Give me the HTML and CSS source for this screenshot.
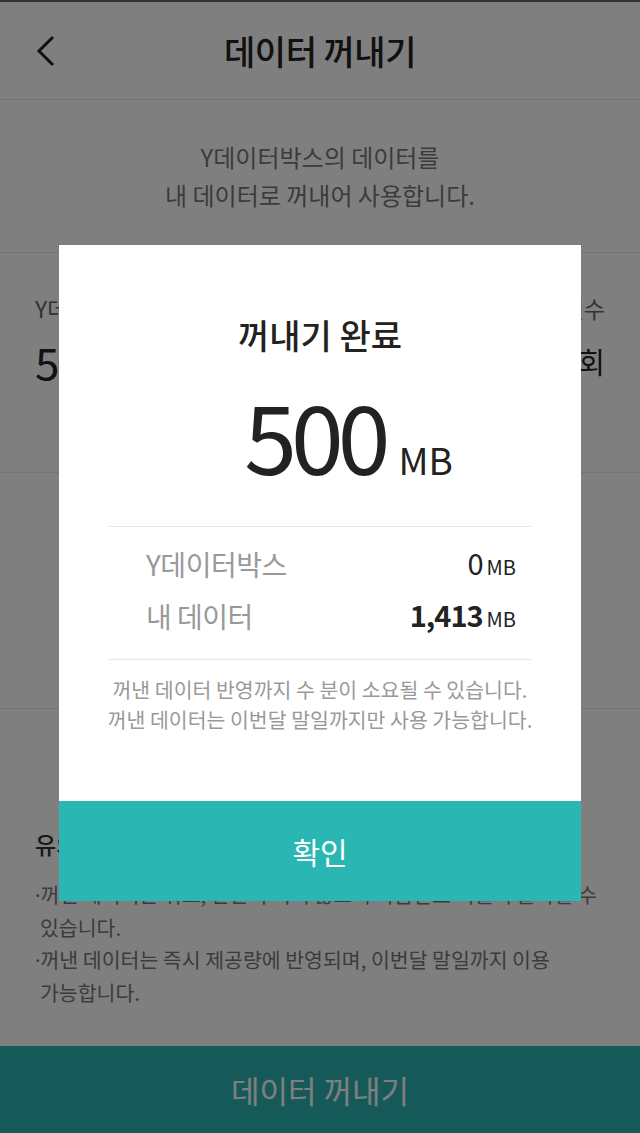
FILE: index.html
```html
<!DOCTYPE html>
<html>
<head>
    <title>데이터 꺼내기</title>
    <link rel="stylesheet" href="styles.css">
</head>
<body>
    <div class="page">
        <!-- 상단 헤더 -->
        <div class="header">
            <a class="back" href="#">
                <svg width="22" height="34" viewBox="0 0 22 34">
                    <polyline points="18,3 4,17 18,31" fill="none" stroke="#222" stroke-width="3"/>
                </svg>
            </a>
            <h1>데이터 꺼내기</h1>
        </div>

        <div class="intro">
            <p>Y데이터박스의 데이터를<br>내 데이터로 꺼내어 사용합니다.</p>
        </div>

        <!-- 잔여량 / 횟수 -->
        <div class="summary">
            <div class="col">
                <div class="label">Y데이터박스 잔여량</div>
                <div class="value">500<span class="unit">MB</span></div>
            </div>
            <div class="col right">
                <div class="label">이번달 꺼내기 가능 횟수</div>
                <div class="value small">2회</div>
            </div>
        </div>

        <!-- 꺼낼 용량 선택 영역 (팝업에 가려짐) -->
        <div class="picker"></div>

        <div class="notice">
            <h2>유의사항</h2>
            <ul>
                <li><span class="dot">·</span>꺼낸 데이터는 취소, 반환이 되지 않으며 다음달로 이월이 불가할 수 있습니다.</li>
                <li><span class="dot">·</span>꺼낸 데이터는 즉시 제공량에 반영되며, 이번달 말일까지 이용 가능합니다.</li>
            </ul>
        </div>

        <button class="submit">데이터 꺼내기</button>
    </div>

    <!-- 완료 팝업 -->
    <div class="overlay">
        <div class="modal">
            <div class="modal-body">
                <h3>꺼내기 완료</h3>
                <div class="big">500<span class="unit">MB</span></div>
                <div class="rows">
                    <div class="row">
                        <span class="row-label">Y데이터박스</span>
                        <span class="row-value">0<span class="unit">MB</span></span>
                    </div>
                    <div class="row">
                        <span class="row-label">내 데이터</span>
                        <span class="row-value"><b>1,413</b><span class="unit">MB</span></span>
                    </div>
                </div>
                <p class="desc">꺼낸 데이터 반영까지 수 분이 소요될 수 있습니다.<br>꺼낸 데이터는 이번달 말일까지만 사용 가능합니다.</p>
            </div>
            <button class="confirm">확인</button>
        </div>
    </div>
</body>
</html>
```

FILE: styles.css
```css
body {
    margin: 0;
    font-family: "Noto Sans CJK KR", "Noto Sans", sans-serif;
    color: #222;
    background: #fff;
    overflow: hidden;
}
.page { display: flex; flex-direction: column; height: 1133px; border-top: 2px solid #666; box-sizing: border-box; }

.header {
    height: 97px;
    display: flex;
    align-items: center;
    justify-content: center;
    border-bottom: 1px solid #e6e6e6;
    position: relative;
}
.header h1 { margin: 0; font-size: 34px; font-weight: 500; letter-spacing: -0.5px; }
.back { position: absolute; left: 35px; top: 32px; }

.intro { height: 152px; display: flex; align-items: center; justify-content: center; border-bottom: 1px solid #e6e6e6; }
.intro p { margin: 0; text-align: center; font-size: 24px; line-height: 38px; color: #777; }

.summary {
    height: 219px;
    display: flex;
    justify-content: space-between;
    padding: 0 35px;
    border-bottom: 1px solid #e6e6e6;
}
.col { padding-top: 40px; }
.col.right { text-align: right; }
.label { font-size: 23px; line-height: 30px; color: #666; }
.value { font-size: 44px; line-height: 60px; margin-top: 8px; }
.value.small { font-size: 29px; }
.value .unit { font-size: 24px; margin-left: 4px; line-height: 1; }

.picker { height: 235px; border-bottom: 1px solid #e6e6e6; }

.notice { flex: 1; padding: 120px 35px 0; }
.notice h2 { margin: 0 0 19px; font-size: 23px; font-weight: 500; line-height: 30px; color: #333; }
.notice ul { margin: 0; padding: 0; list-style: none; }
.notice li {
    font-size: 20.5px;
    line-height: 32px;
    color: #777;
    padding-left: 5px;
    text-indent: -5px;
    word-break: keep-all;
}
.dot { font-family: "Noto Sans", sans-serif; }

.submit {
    height: 87px;
    border: 0;
    background: #2bb5b3;
    color: #fff;
    font-family: inherit;
    font-size: 31px;
}

.overlay {
    position: fixed;
    left: 0;
    top: 0;
    width: 100%;
    height: 100%;
    background: rgba(0, 0, 0, 0.5);
    display: flex;
    justify-content: center;
    align-items: flex-start;
    padding-top: 245px;
    box-sizing: border-box;
}
.modal { width: 522px; background: #fff; display: flex; flex-direction: column; }
.modal-body { padding: 70px 50px 0; text-align: center; }
.modal h3 { margin: 0; font-size: 34px; font-weight: 500; line-height: 40px; }
.big { margin-top: 29px; padding-left: 57px; font-size: 95px; line-height: 100px; height: 100px; letter-spacing: -6px; }
.big .unit { font-size: 37px; line-height: 1; letter-spacing: 0; margin-left: 14px; }

.rows {
    margin-top: 42px;
    padding: 11px 15px 17px 37px;
    border-top: 1px solid #e6e6e6;
    border-bottom: 1px solid #e6e6e6;
}
.row { display: flex; justify-content: space-between; align-items: center; height: 52px; line-height: 52px; }
.row-label { font-size: 28px; color: #999; letter-spacing: -0.5px; }
.row-value { font-size: 29px; letter-spacing: -1px; }
.row-value b { font-weight: 700; }
.row-value .unit { font-size: 20px; margin-left: 4px; letter-spacing: 0; }

.desc { margin: 14px -10px 0; font-size: 20.5px; line-height: 30px; color: #999; white-space: nowrap; }

.confirm {
    margin-top: 67px;
    height: 100px;
    border: 0;
    background: #2ab7b4;
    color: #fff;
    font-family: inherit;
    font-size: 30px;
}
```
